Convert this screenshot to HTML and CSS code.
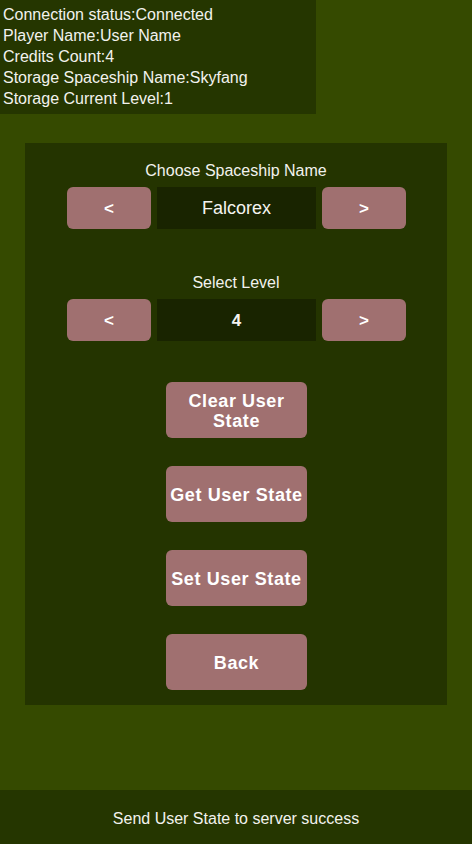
FILE: index.html
```html
<!DOCTYPE html>
<html>
<head>
<meta charset="utf-8">
<link rel="stylesheet" href="styles.css">
</head>
<body>
<div class="screen">
  <div class="info">
    <div>Connection status:Connected</div>
    <div>Player Name:User Name</div>
    <div>Credits Count:4</div>
    <div>Storage Spaceship Name:Skyfang</div>
    <div>Storage Current Level:1</div>
  </div>
  <div class="panel">
    <div class="label first">Choose Spaceship Name</div>
    <div class="selector">
      <div class="btn arrow">&lt;</div>
      <div class="value">Falcorex</div>
      <div class="btn arrow">&gt;</div>
    </div>
    <div class="label second">Select Level</div>
    <div class="selector">
      <div class="btn arrow">&lt;</div>
      <div class="value bold">4</div>
      <div class="btn arrow">&gt;</div>
    </div>
    <div class="actions">
      <div class="btn action">Clear User<br>State</div>
      <div class="btn action">Get User State</div>
      <div class="btn action">Set User State</div>
      <div class="btn action">Back</div>
    </div>
  </div>
  <div class="spacer"></div>
  <div class="status">Send User State to server success</div>
</div>
</body>
</html>
```
FILE: styles.css
```css
html, body {
  margin: 0;
  padding: 0;
}
body {
  font-family: "Liberation Sans", Arial, sans-serif;
  color: #f2f2ee;
}
.screen {
  width: 472px;
  height: 844px;
  background: #354a00;
  display: flex;
  flex-direction: column;
}
.info {
  width: 316px;
  height: 114px;
  padding-left: 3px;
  padding-top: 4px;
  box-sizing: border-box;
  background: #253600;
  font-size: 16px;
  line-height: 21px;
}
.panel {
  margin-top: 29px;
  margin-left: 25px;
  width: 422px;
  height: 562px;
  background: #243400;
  display: flex;
  flex-direction: column;
  align-items: center;
}
.label {
  font-size: 16px;
  line-height: 18px;
  text-align: center;
}
.label.first {
  margin-top: 19px;
  margin-bottom: 7px;
}
.label.second {
  margin-top: 45px;
  margin-bottom: 7px;
}
.selector {
  display: flex;
  gap: 6px;
  height: 42px;
  align-self: flex-start;
  margin-left: 42px;
}
.btn {
  background: #a07070;
  border-radius: 6px;
  color: #ffffff;
  font-weight: bold;
  display: flex;
  align-items: center;
  justify-content: center;
  text-align: center;
}
.arrow {
  width: 84px;
  font-size: 17px;
  padding-top: 1px;
  box-sizing: border-box;
}
.value {
  width: 159px;
  background: #192400;
  display: flex;
  align-items: center;
  justify-content: center;
  font-size: 18px;
  color: #f4f4f0;
  padding-top: 1px;
  box-sizing: border-box;
}
.value.bold {
  font-weight: bold;
  font-size: 17px;
}
.actions {
  margin-top: 41px;
  display: flex;
  flex-direction: column;
  gap: 28px;
  margin-left: 1px;
}
.action {
  width: 141px;
  height: 56px;
  font-size: 18px;
  line-height: 20px;
  letter-spacing: 0.6px;
  padding-top: 1px;
  box-sizing: border-box;
}
.spacer {
  flex: 1;
}
.status {
  height: 54px;
  background: #253600;
  display: flex;
  align-items: center;
  justify-content: center;
  font-size: 16px;
  padding-top: 3px;
  box-sizing: border-box;
}
```
